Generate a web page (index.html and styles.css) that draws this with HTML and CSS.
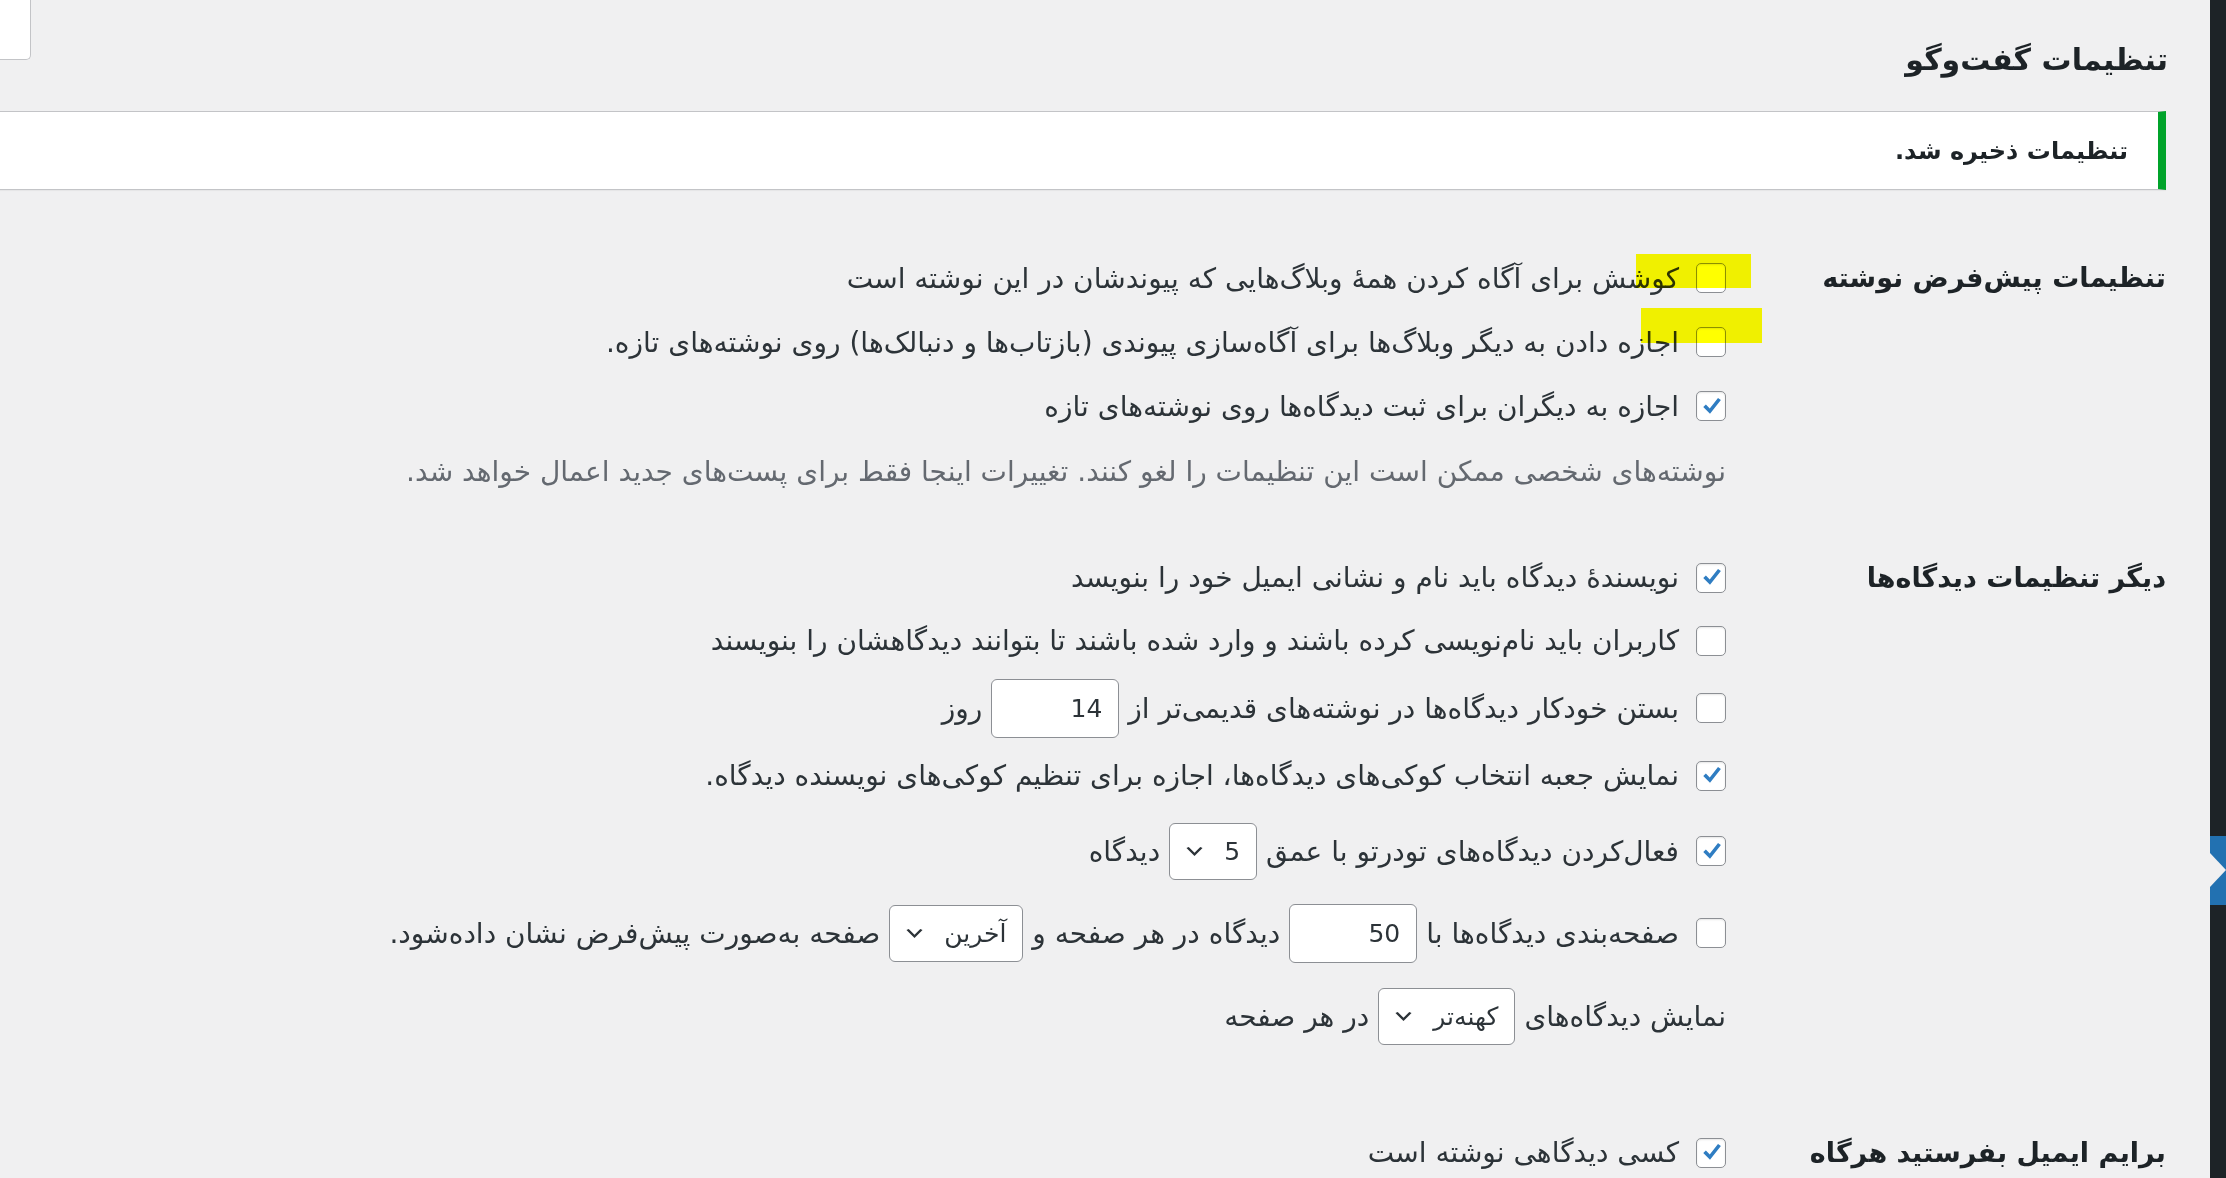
FILE: index.html
```html
<!doctype html>
<html lang="fa" dir="rtl">
<head>
	<meta charset="UTF-8">
	<title>تنظیمات گفت‌وگو</title>
	<link rel="stylesheet" href="styles.css">
</head>
<body>
	<div class="admin">
		<div class="admin-menu">
			<div class="menu-current"></div>
		</div>
		<div class="wpcontent">
			<div class="head">
				<h1>تنظیمات گفت‌وگو</h1>
				<div class="help-tab"></div>
			</div>
			<div class="notice">
				<p>تنظیمات ذخیره شد.</p>
			</div>
			<form>
				<div class="form-row sec-1">
					<div class="th">تنظیمات پیش‌فرض نوشته</div>
					<div class="td">
						<label class="opt">
							<span class="hl hl-1"></span>
							<span class="cb"></span>
							<span>کوشش برای آگاه کردن همهٔ وبلاگ‌هایی که پیوندشان در این نوشته است</span>
						</label>
						<label class="opt">
							<span class="hl hl-2"></span>
							<span class="cb"></span>
							<span>اجازه دادن به دیگر وبلاگ‌ها برای آگاه‌سازی پیوندی (بازتاب‌ها و دنبالک‌ها) روی نوشته‌های تازه.</span>
						</label>
						<label class="opt">
							<span class="cb"><svg viewBox="0 0 20 20"><path d="M3.4 10.3l2.1-2 3.1 3.2 6.6-8.4 2.3 1.7-8.7 11z"/></svg></span>
							<span>اجازه به دیگران برای ثبت دیدگاه‌ها روی نوشته‌های تازه</span>
						</label>
						<p class="desc">نوشته‌های شخصی ممکن است این تنظیمات را لغو کنند. تغییرات اینجا فقط برای پست‌های جدید اعمال خواهد شد.</p>
					</div>
				</div>

				<div class="form-row sec-2">
					<div class="th">دیگر تنظیمات دیدگاه‌ها</div>
					<div class="td">
						<label class="opt">
							<span class="cb"><svg viewBox="0 0 20 20"><path d="M3.4 10.3l2.1-2 3.1 3.2 6.6-8.4 2.3 1.7-8.7 11z"/></svg></span>
							<span>نویسندهٔ دیدگاه باید نام و نشانی ایمیل خود را بنویسد</span>
						</label>
						<label class="opt">
							<span class="cb"></span>
							<span>کاربران باید نام‌نویسی کرده باشند و وارد شده باشند تا بتوانند دیدگاهشان را بنویسند</span>
						</label>
						<div class="opt field-a">
							<span class="cb"></span>
							<span>بستن خودکار دیدگاه‌ها در نوشته‌های قدیمی‌تر از</span>
							<input class="num" type="text" value="14">
							<span>روز</span>
						</div>
						<label class="opt">
							<span class="cb"><svg viewBox="0 0 20 20"><path d="M3.4 10.3l2.1-2 3.1 3.2 6.6-8.4 2.3 1.7-8.7 11z"/></svg></span>
							<span>نمایش جعبه انتخاب کوکی‌های دیدگاه‌ها، اجازه برای تنظیم کوکی‌های نویسنده دیدگاه.</span>
						</label>
						<div class="opt field-b">
							<span class="cb"><svg viewBox="0 0 20 20"><path d="M3.4 10.3l2.1-2 3.1 3.2 6.6-8.4 2.3 1.7-8.7 11z"/></svg></span>
							<span>فعال‌کردن دیدگاه‌های تودرتو با عمق</span>
							<span class="select"><span>5</span><svg viewBox="0 0 20 20"><path d="M5 6l5 5 5-5 2 1-7 7-7-7z"/></svg></span>
							<span>دیدگاه</span>
						</div>
						<div class="opt field-c">
							<span class="cb"></span>
							<span>صفحه‌بندی دیدگاه‌ها با</span>
							<input class="num" type="text" value="50">
							<span>دیدگاه در هر صفحه و</span>
							<span class="select"><span>آخرین</span><svg viewBox="0 0 20 20"><path d="M5 6l5 5 5-5 2 1-7 7-7-7z"/></svg></span>
							<span>صفحه به‌صورت پیش‌فرض نشان داده‌شود.</span>
						</div>
						<div class="opt field-d">
							<span>نمایش دیدگاه‌های</span>
							<span class="select"><span>کهنه‌تر</span><svg viewBox="0 0 20 20"><path d="M5 6l5 5 5-5 2 1-7 7-7-7z"/></svg></span>
							<span>در هر صفحه</span>
						</div>
					</div>
				</div>

				<div class="form-row sec-3">
					<div class="th">برایم ایمیل بفرستید هرگاه</div>
					<div class="td">
						<label class="opt">
							<span class="cb"><svg viewBox="0 0 20 20"><path d="M3.4 10.3l2.1-2 3.1 3.2 6.6-8.4 2.3 1.7-8.7 11z"/></svg></span>
							<span>کسی دیدگاهی نوشته است</span>
						</label>
					</div>
				</div>
			</form>
		</div>
	</div>
</body>
</html>
```

FILE: styles.css
```css
*{
	margin:0;
	padding:0;
	box-sizing:border-box;
}
html, body{
	height:100%;
}
body{
	background:#f0f0f1;
	color:#2c3338;
	font-family:"DejaVu Sans", sans-serif;
	font-size:28px;
	overflow:hidden;
}
.admin{
	display:flex;
	min-height:1178px;
}
/* menu strip on the right */
.admin-menu{
	flex:none;
	width:16px;
	background:#1d2327;
}
.menu-current{
	position:relative;
	margin-top:836px;
	height:69px;
	background:#2271b1;
}
.menu-current::after{
	content:"";
	position:absolute;
	left:0;
	top:17px;
	border-left:16px solid #f0f0f1;
	border-top:17px solid transparent;
	border-bottom:17px solid transparent;
}
.wpcontent{
	flex:1;
	padding-right:44px;
}
.head{
	display:flex;
	justify-content:space-between;
	align-items:flex-start;
}
.head h1{
	margin-top:38px;
	margin-right:-2px;
	font-size:30px;
	line-height:44px;
	font-weight:bold;
	color:#1d2327;
}
.help-tab{
	width:31px;
	height:60px;
	background:#fff;
	border-right:1px solid #c3c4c7;
	border-bottom:1px solid #c3c4c7;
	border-bottom-right-radius:5px;
}
.notice{
	display:flex;
	align-items:center;
	height:79px;
	margin-top:29px;
	padding-right:30px;
	background:#fff;
	border-top:1px solid #c3c4c7;
	border-bottom:1px solid #c3c4c7;
	border-right:8px solid #00a32a;
	box-shadow:0 1px 1px rgba(0,0,0,.04);
}
.notice p{
	font-size:24px;
	font-weight:bold;
	color:#1d2327;
}
.form-row{
	display:grid;
	grid-template-columns:440px 1fr;
}
.sec-1{
	margin-top:56px;
}
.sec-1 .opt{
	min-height:64px;
}
.sec-2{
	margin-top:44px;
}
.sec-3{
	margin-top:60px;
}
.th{
	font-size:27px;
	font-weight:bold;
	color:#1d2327;
	line-height:63px;
}
.opt{
	position:relative;
	display:flex;
	align-items:center;
	gap:9px;
	min-height:63px;
	white-space:nowrap;
}
/* rows holding inputs are taller */
.opt.field-a{
	min-height:72px;
}
.opt.field-b{
	min-height:88px;
}
.opt.field-c{
	min-height:76px;
}
.opt.field-d{
	min-height:90px;
}
.cb{
	flex:none;
	display:flex;
	align-items:center;
	justify-content:center;
	width:30px;
	height:30px;
	margin-left:8px;
	background:#fff;
	border:1px solid #8c8f94;
	border-radius:5px;
	box-shadow:inset 0 1px 2px rgba(0,0,0,.1);
}
.cb svg{
	width:25px;
	height:25px;
	fill:#2f7dc2;
}
.desc{
	padding-top:4px;
	line-height:60px;
	color:#646970;
	white-space:nowrap;
}
.num{
	width:128px;
	height:59px;
	padding:0 16px;
	font-family:"DejaVu Sans", sans-serif;
	font-size:25px;
	color:#2c3338;
	background:#fff;
	border:1px solid #8c8f94;
	border-radius:6px;
}
.select{
	display:inline-flex;
	align-items:center;
	gap:18px;
	height:57px;
	padding:0 16px 0 13px;
	font-size:25px;
	color:#2c3338;
	background:#fff;
	border:1px solid #8c8f94;
	border-radius:6px;
}
.select svg{
	width:23px;
	height:23px;
	fill:#2c3338;
}
/* yellow marker strokes over the first two boxes */
.hl{
	position:absolute;
	background:#ffff00;
	mix-blend-mode:multiply;
}
.hl-1{
	top:8px;
	right:-25px;
	width:115px;
	height:34px;
}
.hl-2{
	top:-2px;
	right:-36px;
	width:121px;
	height:35px;
}
```
